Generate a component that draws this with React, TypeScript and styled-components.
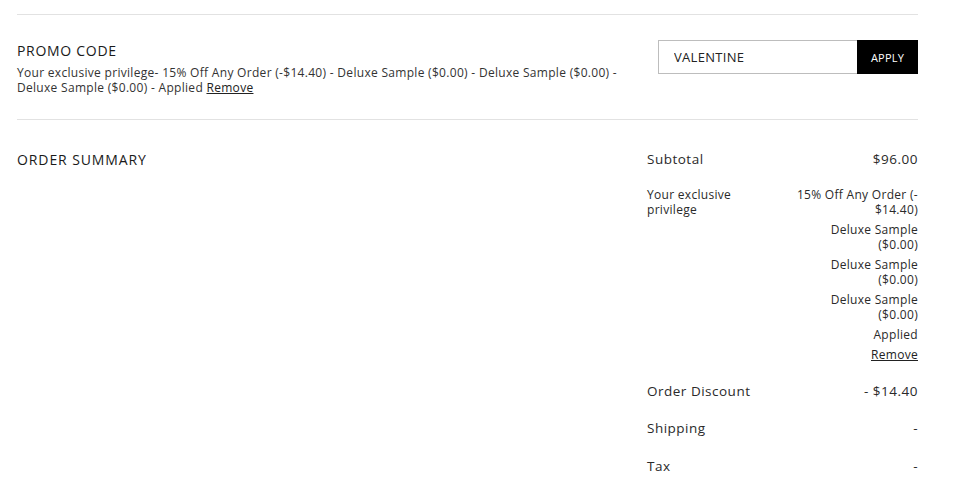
import React from 'react';
import styled, { createGlobalStyle } from 'styled-components';

const GlobalStyle = createGlobalStyle`
  body {
    margin: 0;
    background: #ffffff;
    font-family: "Open Sans", "Liberation Sans", sans-serif;
    color: #222;
  }
`;

const Page = styled.div`
  width: 901px;
  padding: 14px 0 0 17px;
`;

const PromoSection = styled.section`
  display: flex;
  justify-content: space-between;
  align-items: flex-start;
  border-top: 1px solid #e2e2e2;
  border-bottom: 1px solid #e2e2e2;
  padding: 25px 0 24px;
`;

const PromoInfo = styled.div`
  width: 615px;
  padding-top: 2px;
`;

const SectionTitle = styled.h2`
  margin: 0;
  font-size: 14px;
  line-height: 18px;
  font-weight: 400;
  letter-spacing: 0.7px;
  color: #1a1a1a;
  text-transform: uppercase;
`;

const PromoText = styled.p`
  margin: 5px 0 0;
  font-size: 12px;
  line-height: 15px;
  letter-spacing: 0.3px;
  color: #333;
`;

const RemoveLink = styled.a`
  color: #222;
  text-decoration: underline;
  cursor: pointer;
`;

const PromoForm = styled.form`
  display: flex;
`;

const PromoInput = styled.input`
  box-sizing: border-box;
  width: 199px;
  height: 34px;
  border: 1px solid #bdbdbd;
  border-right: none;
  padding: 0 15px;
  font-family: inherit;
  font-size: 13px;
  letter-spacing: 0.3px;
  color: #222;
  outline: none;
`;

const ApplyButton = styled.button`
  width: 61px;
  height: 34px;
  border: none;
  background: #000;
  color: #fff;
  font-family: inherit;
  font-size: 11px;
  letter-spacing: 0.2px;
  text-transform: uppercase;
  cursor: pointer;
`;

const SummarySection = styled.section`
  display: flex;
  justify-content: space-between;
  align-items: flex-start;
  padding-top: 21px;
`;

const SummaryTitle = styled(SectionTitle)`
  margin-top: 10px;
  line-height: 17px;
  letter-spacing: 0.9px;
`;

const SummaryTable = styled.div`
  width: 271px;
`;

const Row = styled.div<{ $compact?: boolean }>`
  display: flex;
  justify-content: space-between;
  align-items: flex-start;
  padding: ${p => (p.$compact ? '8px 0 11px' : '11px 0 11.5px')};
  font-size: ${p => (p.$compact ? '12px' : '13.5px')};
  letter-spacing: ${p => (p.$compact ? '0.3px' : '0.5px')};
  line-height: 15px;
  color: #2a2a2a;
`;

const Label = styled.span<{ $width?: number }>`
  width: ${p => (p.$width ? `${p.$width}px` : 'auto')};
`;

const Value = styled.span`
  text-align: right;
`;

const DiscountList = styled.div`
  width: 124px;
  text-align: right;
`;

const DiscountItem = styled.div`
  margin-bottom: 5px;
  &:last-child {
    margin-bottom: 0;
  }
`;

const discounts: React.ReactNode[] = [
  <>15% Off Any Order (-<wbr />$14.40)</>,
  'Deluxe Sample ($0.00)',
  'Deluxe Sample ($0.00)',
  'Deluxe Sample ($0.00)',
];

const App = () => {
  return (
    <Page>
      <GlobalStyle />
      <PromoSection>
        <PromoInfo>
          <SectionTitle>Promo Code</SectionTitle>
          <PromoText>
            Your exclusive privilege- 15% Off Any Order (-$14.40) - Deluxe Sample ($0.00) - Deluxe Sample ($0.00) -
            Deluxe Sample ($0.00) - Applied <RemoveLink>Remove</RemoveLink>
          </PromoText>
        </PromoInfo>
        <PromoForm onSubmit={e => e.preventDefault()}>
          <PromoInput defaultValue="VALENTINE" />
          <ApplyButton type="submit">Apply</ApplyButton>
        </PromoForm>
      </PromoSection>
      <SummarySection>
        <SummaryTitle>Order Summary</SummaryTitle>
        <SummaryTable>
          <Row>
            <Label>Subtotal</Label>
            <Value>$96.00</Value>
          </Row>
          <Row $compact>
            <Label $width={100}>Your exclusive privilege</Label>
            <DiscountList>
              {discounts.map((d, i) => (
                <DiscountItem key={i}>{d}</DiscountItem>
              ))}
              <DiscountItem>Applied</DiscountItem>
              <DiscountItem>
                <RemoveLink>Remove</RemoveLink>
              </DiscountItem>
            </DiscountList>
          </Row>
          <Row>
            <Label>Order Discount</Label>
            <Value>- $14.40</Value>
          </Row>
          <Row>
            <Label>Shipping</Label>
            <Value>-</Value>
          </Row>
          <Row>
            <Label>Tax</Label>
            <Value>-</Value>
          </Row>
        </SummaryTable>
      </SummarySection>
    </Page>
  );
};

export default App;
